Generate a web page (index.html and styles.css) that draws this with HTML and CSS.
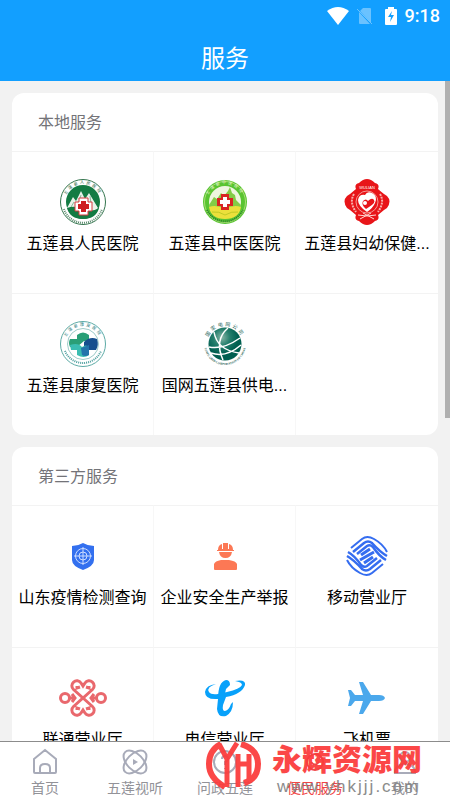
FILE: index.html
```html
<!DOCTYPE html>
<html lang="zh-CN">
<head>
  <meta charset="UTF-8" />
  <meta name="viewport" content="width=device-width, initial-scale=1.0"/>
  <title>服务</title>
  <link rel="stylesheet" href="styles.css">
</head>
<body>
  <header class="top">
    <div class="status">
      <svg width="22" height="18" viewBox="0 0 22 18"><path d="M0 4Q11-4 22 4L11 18Z" fill="#fff"/></svg>
      <svg class="sim" width="16" height="18" viewBox="0 0 16 18"><path d="M6 1h7q1 0 1 1v14L3 4ZM2 5l11 12H3q-1 0-1-1Z" fill="#6ac2ff"/><path d="M0 2l15 15" stroke="#6ac2ff" stroke-width="1"/></svg>
      <svg class="battery" width="12" height="18" viewBox="0 0 12 18"><path d="M3 0h6v2h2q1 0 1 1v14q0 1-1 1H1q-1 0-1-1V3q0-1 1-1h2Z" fill="#fff"/><path d="M7 4L3 10h3l-1 5 4-7H6Z" fill="#129fff"/></svg>
      <span>9:18</span>
    </div>
    <h1>服务</h1>
  </header>

  <main class="content">
    <section class="card">
      <h2>本地服务</h2>
      <div class="grid">
        <a class="item" href="#">
          <svg viewBox="0 0 48 48">
            <defs><path id="arcTop" d="M6 24a18 18 0 0 1 36 0"/><path id="arcBottom" d="M3 24a21 21 0 0 0 42 0"/></defs>
            <circle cx="24" cy="24" r="22.5" fill="#fff" stroke="#34754e"/>
            <circle cx="24" cy="24" r="17" fill="#137b43"/>
            <path d="M8 30l6-11 3 4 5-10 4 8 4-6 9 15-3 5H12Z" fill="#e8f2ea"/>
            <path d="M12 29l3-5M22 17l-2 7M31 18l1 8" fill="none" stroke="#8ab99b"/>
            <path d="M8 30q8-3 16 1t16-1q-3 11-16 11T8 30Z" fill="#137b43"/>
            <path d="M20 20h9v4h4v9h-4v4h-9v-4h-4v-9h4Z" fill="#fff" stroke="#d33b3e"/>
            <path d="M22 23h5v3h3v5h-3v3h-5v-3h-3v-5h3Z" fill="#ce2024"/>
            <text class="seal green"><textPath href="#arcTop" startOffset="50%">五莲县人民医院</textPath></text>
            <path d="M5 31a20 20 0 0 0 38 0" fill="none" stroke="#5b8b6d" stroke-width="2" stroke-dasharray="1 1"/>
          </svg>
          <span>五莲县人民医院</span>
        </a>
        <a class="item" href="#">
          <svg viewBox="0 0 48 48">
            <circle cx="24" cy="24" r="22" fill="#59c431"/>
            <circle cx="24" cy="24" r="20.5" fill="none" stroke="#a8dd75"/>
            <circle cx="24" cy="24" r="16" fill="#eef6df"/>
            <path d="M8 27l5-8 3 2 4-6 3 3 4-5 2-4 2 6 3 2 1 5 5 5-2 6H10Z" fill="#83cc46"/>
            <path d="M8 29q7-3 16 2 9-5 16-2-2 12-16 12T8 29Z" fill="#ebe03b"/>
            <path d="M11 34q7-1 13 3 7-4 13-3" fill="none" stroke="#bfca25"/>
            <path d="M20 16h8v4h4v8h-4v4h-8v-4h-4v-8h4Z" fill="#d82422"/>
            <path d="M22 19h4v3h3v4h-3v3h-4v-3h-3v-4h3Z" fill="#fff"/>
            <text class="seal pale"><textPath href="#arcTop" startOffset="50%">五莲县中医医院</textPath></text>
            <path d="M6 32a20 20 0 0 0 36 0" fill="none" stroke="#267f2c" stroke-width="2" stroke-dasharray="1 1"/>
          </svg>
          <span>五莲县中医医院</span>
        </a>
        <a class="item" href="#">
          <svg viewBox="0 0 48 48">
            <path d="M13 11Q11 6 16 5q4-4 8-4t8 4q5 1 3 6 2 2 6 5l3 2q5 5 0 12l-3 2-6 5q2 5-3 6-4 4-8 4t-8-4q-5-1-3-6l-6-5-3-2q-5-7 0-12l3-2Z" fill="#e81519"/>
            <path d="M11 16q-5 8 2 18M37 16q5 8-2 18" fill="none" stroke="#f7b0ac" stroke-width="2" stroke-dasharray="2 1"/>
            <path d="M15 37l9 1 9-1M20 35l11 6M28 35l-11 6" fill="none" stroke="#ffd8d3"/>
            <circle cx="24" cy="24" r="11" fill="#e81519" stroke="#f59a95"/>
            <path d="M24 34q-9-6-9-12 1-6 7-5 2-4 7-2 6 3 3 10-2 5-8 9Z" fill="#fff"/>
            <path d="M23 31q-5-4-3-8 3-3 5 0 4-4 6-1 2 3-5 7Z" fill="#e81519"/>
            <circle cx="22" cy="25" r="2" fill="#fff"/>
            <text class="seal white" x="24" y="11">WULIAN</text>
          </svg>
          <span>五莲县妇幼保健...</span>
        </a>
        <a class="item" href="#">
          <svg viewBox="0 0 48 48">
            <circle cx="24" cy="24" r="22.5" fill="#fff" stroke="#5caaa5"/>
            <circle cx="24" cy="24" r="15.5" fill="#fff" stroke="#9dcbc8"/>
            <path d="M18 15q6-5 12 0v6h-5l-7 6h-7q-2-4 0-8h7Z" fill="#2a9f77"/>
            <path d="M25 22q6-6 13-3 2 6-1 11h-7l-5-3Z" fill="#174f8e"/>
            <path d="M11 25q8-3 12 2 4-3 7 0v8q-5 4-12 0v-5h-6Z" fill="#3abdb1"/>
            <path d="M22 28l8-3v10q-4 2-7 0Z" fill="#2374ab"/>
            <text class="seal teal"><textPath href="#arcTop" startOffset="50%">五莲县康复医院</textPath></text>
            <path d="M6 31a19.5 19.5 0 0 0 36 0" fill="none" stroke="#4c9e9d" stroke-width="2" stroke-dasharray="1 1"/>
          </svg>
          <span>五莲县康复医院</span>
        </a>
        <a class="item" href="#">
          <svg viewBox="0 0 48 48">
            <defs><radialGradient id="globe" cx=".4" cy=".3"><stop offset="0" stop-color="#86b5a6"/><stop offset=".5" stop-color="#257f6d"/><stop offset="1" stop-color="#005f50"/></radialGradient></defs>
            <circle cx="24" cy="24" r="16.5" fill="url(#globe)"/>
            <path d="M27 8q-14 12-5 32M13 12q3 18 25 21M8 27q14 3 31-9M10 33q15 5 30-8" fill="none" stroke="#fff" stroke-width="1.5"/>
            <text class="seal dark"><textPath href="#arcTop" startOffset="50%">国家电网公司</textPath></text>
            <text class="latin"><textPath href="#arcBottom" startOffset="50%">STATE GRID CORPORATION OF CHINA</textPath></text>
          </svg>
          <span>国网五莲县供电...</span>
        </a>
        <div class="item"></div>
      </div>
    </section>

    <section class="card">
      <h2>第三方服务</h2>
      <div class="grid">
        <a class="item" href="#">
          <svg viewBox="0 0 48 48">
            <path d="M24 11q5 3 11 3v14q0 6-11 10-11-4-11-10V14q6 0 11-3Z" fill="#3370ef"/>
            <g fill="none" stroke="#cbdcff"><circle cx="24" cy="24" r="7.5"/><circle cx="24" cy="24" r="4"/><path d="M24 15v18M15 24h18"/></g>
          </svg>
          <span>山东疫情检测查询</span>
        </a>
        <a class="item" href="#">
          <svg viewBox="0 0 48 48" fill="#fc7855">
            <path d="M17 18q0-5 4-6v5h1v-6h5v6h1v-5q4 1 4 6h1v1H16v-1ZM18 20h13q-1 6-6.500 6T18 20ZM13 37v-5q1-3 7-4h8q7 1 8 4v5q0 1-1 1H14q-1 0-1-1Z"/>
          </svg>
          <span>企业安全生产举报</span>
        </a>
        <a class="item" href="#">
          <svg viewBox="0 0 48 48" fill="none" stroke="#356df0" stroke-width="3">
            <defs>
              <g id="waves">
                <path d="M8 16L19 7Q24 3 31 7 40 12 44 20" stroke-width="2"/>
                <path d="M10 20L21 11Q25 8 29 11 37 20 44 24" stroke-width="2.500"/>
                <path d="M14 22L24 14Q27 12 30 15 36 24 43 28" stroke-width="2.500"/>
              </g>
            </defs>
            <use href="#waves"/>
            <use href="#waves" transform="rotate(180 24 24)"/>
            <path d="M18 23L27 17M30 25L21 31M17 28L31 20"/>
          </svg>
          <span>移动营业厅</span>
        </a>
        <a class="item" href="#">
          <svg viewBox="0 0 48 48" fill="none" stroke="#e9686d" stroke-width="3">
            <defs>
              <path id="loops" d="M24 24L14.500 15.500A5 5 0 1 1 22 9L24 12 26 9A5 5 0 1 1 33.500 15.500ZM18 12v2l3-1M30 12v2l-3-1"/>
            </defs>
            <use href="#loops"/>
            <use href="#loops" transform="rotate(180 24 24)"/>
            <circle cx="6" cy="24" r="4.500"/><circle cx="42" cy="24" r="4.500"/>
            <path d="M11 24h4M13 20l3 4-3 4M37 24h-4M35 20l-3 4 3 4"/>
          </svg>
          <span>联通营业厅</span>
        </a>
        <a class="item" href="#">
          <svg viewBox="0 0 48 48" fill="#08a1fa">
            <path d="M15 10Q5 13 8 18q2 3 9 2l9-2q13-3 15-7 0-3-7-4 11-2 10 4-3 9-19 12l-3 8q-1 6 2 6 4-1 6-7l2-2q0 10-7 14-8 2-9-7l1-10Q4 26 4 18q1-7 11-8Z"/>
            <path d="M25 6q4 0 4 5l-4 4-2 9-6 1q0-17 8-19Z"/>
          </svg>
          <span>电信营业厅</span>
        </a>
        <a class="item" href="#">
          <svg viewBox="0 0 48 48" fill="#4ba8ec">
            <path d="M42 24q-1 3-6 3h-8l-8 13h-4l4-13h-8l-4 5H5l2-8-2-8h3l4 5h8L16 8h4l8 13h8q5 0 6 3Z"/>
          </svg>
          <span>飞机票</span>
        </a>
      </div>
    </section>
    <div class="thumb"></div>
  </main>

  <nav class="tabs">
    <a href="#">
      <svg viewBox="0 0 28 28"><path d="M3 11L14 2l11 9v13q0 1-1 1H4q-1 0-1-1ZM9 25v-5q0-4 5-4t5 4v5"/></svg>
      <span>首页</span>
    </a>
    <a href="#">
      <svg viewBox="0 0 28 28"><ellipse cx="14" cy="14" rx="14" ry="8" transform="rotate(45 14 14)"/><ellipse cx="14" cy="14" rx="14" ry="8" transform="rotate(-45 14 14)"/><path class="solid" d="M12 11l5 3-5 3Z"/></svg>
      <span>五莲视听</span>
    </a>
    <a href="#">
      <svg viewBox="0 0 28 28"><circle cx="14" cy="14" r="11"/><path d="M11 11q0-3 3-3t3 3q0 2-3 3v3M14 20v1"/></svg>
      <span>问政五莲</span>
    </a>
    <a class="active" href="#">
      <svg viewBox="0 0 28 28"><circle cx="14" cy="14" r="8"/><path d="M10 14q4 5 8 0"/></svg>
      <span>便民服务</span>
    </a>
    <a href="#">
      <svg viewBox="0 0 28 28"><circle cx="14" cy="9" r="5"/><path d="M4 25q0-9 10-9t10 9Z"/></svg>
      <span>我的</span>
    </a>
    <div class="brand">
      <svg viewBox="0 0 56 48" fill="none" stroke="#fb3c3c" stroke-width="5">
        <path d="M16 2Q4 8 4 22t16 23M36 2q17 5 17 20T39 41" stroke-width="6"/>
        <path d="M14 2l8 15L32 1M22 15v30M33 12v33M44 12v26M33 22h11"/>
      </svg>
      <div>
        <strong>永辉资源网</strong>
        <small>www.yhkjjj.com</small>
      </div>
    </div>
  </nav>
</body>
</html>
```
FILE: styles.css
```css
* {
  box-sizing: border-box;
}

body {
  margin: 0;
  height: 100vh;
  display: flex;
  flex-direction: column;
  font-family: "Liberation Sans", "Noto Sans CJK SC", sans-serif;
  background: #f2f2f2;
}

a {
  color: inherit;
  text-decoration: none;
}

svg {
  display: block;
}

.top {
  background: #129fff;
  color: #fff;
}

.status {
  height: 32px;
  padding: 0 10px;
  display: flex;
  align-items: center;
  justify-content: flex-end;
  font: 500 18px/32px Roboto, sans-serif;
}

.status .sim {
  margin-left: 8px;
}

.status .battery {
  margin: 0 8px 0 12px;
}

.top h1 {
  margin: 0;
  padding: 9px 0 4px;
  font-size: 24px;
  font-weight: 400;
  line-height: 36px;
  text-align: center;
}

.content {
  flex: 1;
  min-height: 0;
  overflow: hidden;
  position: relative;
  padding: 12px;
}

.card {
  background: #fff;
  border-radius: 12px;
  margin-bottom: 12px;
  overflow: hidden;
}

.card h2 {
  margin: 0;
  padding: 2px 26px 0;
  font-size: 16px;
  font-weight: 400;
  line-height: 56px;
  color: #737378;
}

.grid {
  display: grid;
  grid-template-columns: repeat(3, minmax(0, 1fr));
}

.item {
  height: 142px;
  padding: 26px 5px 0;
  border-top: 1px solid #f3f3f3;
  border-right: 1px solid #f7f7f7;
  display: flex;
  flex-direction: column;
  align-items: center;
  gap: 6px;
  font-size: 16px;
  line-height: 24px;
  color: #000;
}

.item:nth-child(3n) {
  border-right: none;
}

.item svg {
  width: 48px;
  height: 48px;
}

.item span {
  white-space: nowrap;
}

.seal {
  font-size: 4px;
  letter-spacing: 2px;
  text-anchor: middle;
}

.green { fill: #286743; }
.pale { fill: #e6f7ce; }
.white { fill: #fff; letter-spacing: 0; }
.teal { fill: #277d7e; }
.dark { fill: #1d655a; font-size: 5px; }

.latin {
  font: bold 3px "Liberation Serif", serif;
  text-anchor: middle;
  fill: #235e52;
}

.thumb {
  position: absolute;
  top: 0;
  right: 0;
  width: 5px;
  height: 51%;
  background: #b0b0b0;
}

.tabs {
  position: relative;
  display: flex;
  padding: 6px 0 1px;
  border-top: 1px solid #8c8c8c;
  background: #fff;
}

.tabs a {
  flex: 1;
  display: flex;
  flex-direction: column;
  align-items: center;
  gap: 1px;
  font-size: 14px;
  line-height: 22px;
  color: #929298;
}

.tabs a svg {
  width: 28px;
  height: 28px;
  fill: none;
  stroke: #a8abb9;
  stroke-width: 2;
}

.tabs a .solid {
  fill: #a8abb9;
  stroke: none;
}

.tabs .active {
  color: #f04545;
}

.tabs .active svg {
  stroke: #f04545;
}

.brand {
  position: absolute;
  top: 0;
  right: 28px;
  display: flex;
  gap: 11px;
  opacity: 0.94;
  pointer-events: none;
}

.brand svg {
  width: 56px;
  height: 48px;
}

.brand strong,
.brand small {
  display: block;
}

.brand strong {
  font-size: 30px;
  font-weight: 900;
  line-height: 36px;
  color: #fb3c3c;
}

.brand small {
  padding-left: 5px;
  font-size: 17px;
  line-height: 18px;
  letter-spacing: 2px;
  color: #858585;
}
```
